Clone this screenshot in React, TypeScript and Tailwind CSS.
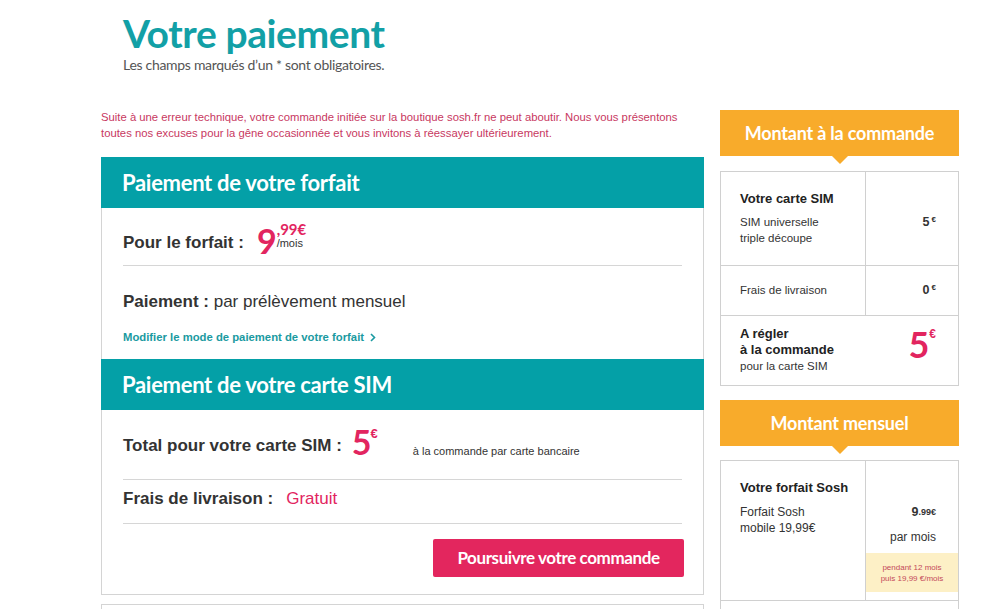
import React from 'react'

const HEAD = { fontFamily: 'Lato, "Open Sans", sans-serif' }

function TealHeader({ title }: { title: string }) {
  return (
    <div className="h-[51px] bg-[#04a0a7] flex items-center pl-[21px]">
      <h2 className="text-white text-[22px] font-bold tracking-[-0.3px]" style={HEAD}>
        {title}
      </h2>
    </div>
  )
}

function OrangeHeader({ title }: { title: string }) {
  return (
    <div className="relative">
      <div className="h-[46px] bg-[#f8ab2b] flex items-center justify-center">
        <h3 className="text-white text-[18px] font-bold tracking-[-0.2px]" style={HEAD}>
          {title}
        </h3>
      </div>
      <div className="absolute left-1/2 -translate-x-1/2 top-[46px] w-0 h-0 border-l-[8px] border-r-[8px] border-t-[8px] border-l-transparent border-r-transparent border-t-[#f8ab2b]" />
    </div>
  )
}

export default function App() {
  return (
    <div className="w-[999px] h-[609px] overflow-hidden bg-white" style={{ fontFamily: '"Liberation Sans", Arial, sans-serif' }}>
      <div className="pl-[123px] pt-[11px]">
        <h1 className="text-[39px] leading-[44px] font-bold text-[#12a0a6] tracking-[-0.4px]" style={HEAD}>
          Votre paiement
        </h1>
        <p className="text-[14px] leading-[16px] text-[#555] tracking-[-0.3px] mt-[2px]" style={HEAD}>
          Les champs marqués d’un * sont obligatoires.
        </p>
      </div>

      <div className="flex gap-[16px] pl-[101px] mt-[37px]">
        {/* left column */}
        <div className="w-[603px] shrink-0 -mt-[1px]">
          <p className="text-[11.3px] leading-[16px] text-[#c8385f] pr-[8px]">
            Suite à une erreur technique, votre commande initiée sur la boutique sosh.fr ne peut aboutir. Nous vous présentons
            toutes nos excuses pour la gêne occasionnée et vous invitons à réessayer ultérieurement.
          </p>

          <div className="mt-[16px]">
            <TealHeader title="Paiement de votre forfait" />
            <div className="border-x border-[#d4d4d4] px-[21px]">
              <div className="h-[58px] flex items-center border-b border-[#d6d6d6] pt-[12px]">
                <span className="text-[17px] font-bold text-[#333]">Pour le forfait :</span>
                <span className="ml-[13px] flex items-start text-[#e2255f] -mt-[4px]">
                  <span className="text-[34px] leading-[30px] font-bold" style={HEAD}>9</span>
                  <span className="flex flex-col ml-[0px] -mt-[4px]">
                    <span className="text-[15px] leading-[15px] font-bold" style={HEAD}>,99€</span>
                    <span className="text-[11px] leading-[12px] text-[#333]">/mois</span>
                  </span>
                </span>
              </div>
              <div className="h-[54px] flex items-end pb-[6px]">
                <span className="text-[17px] text-[#333]">
                  <span className="font-bold">Paiement :</span> par prélèvement mensuel
                </span>
              </div>
              <div className="h-[39px] flex items-start pt-[9px]">
                <span className="text-[11.3px] font-bold text-[#1a9aa1] flex items-center gap-[6px]">
                  Modifier le mode de paiement de votre forfait
                  <svg width="6" height="9" viewBox="0 0 6 9" fill="none">
                    <path d="M1 1l3.5 3.5L1 8" stroke="#1a9aa1" strokeWidth="1.6" />
                  </svg>
                </span>
              </div>
            </div>

            <TealHeader title="Paiement de votre carte SIM" />
            <div className="border-x border-b border-[#d4d4d4] px-[21px] pb-[17px]">
              <div className="h-[70px] flex items-center border-b border-[#d6d6d6] pt-[2px]">
                <span className="text-[17px] font-bold text-[#333]">Total pour votre carte SIM :</span>
                <span className="ml-[10px] flex items-start text-[#e2255f] -mt-[8px]">
                  <span className="text-[34px] leading-[30px] font-bold" style={HEAD}>5</span>
                  <span className="text-[13px] leading-[13px] font-bold -ml-[1px]">€</span>
                </span>
                <span className="ml-[35px] mt-[12px] text-[11px] text-[#333]">à la commande par carte bancaire</span>
              </div>
              <div className="h-[44px] flex items-center border-b border-[#d6d6d6] pb-[6px]">
                <span className="text-[17px] font-bold text-[#333]">Frais de livraison :</span>
                <span className="ml-[13px] text-[17px] text-[#e2255f]">Gratuit</span>
              </div>
              <div className="flex justify-end pt-[15px] -mr-[2px]">
                <button className="w-[251px] h-[38px] rounded-[2px] bg-[#e3265e] text-white text-[17px] font-bold tracking-[-0.4px]" style={HEAD}>
                  Poursuivre votre commande
                </button>
              </div>
            </div>
            <div className="mt-[9px] h-[40px] border border-[#d4d4d4]" />
          </div>
        </div>

        {/* right column */}
        <div className="w-[239px] shrink-0">
          <OrangeHeader title="Montant à la commande" />
          <div className="mt-[15px] border border-[#d0d0d0] text-[#333]">
            <div className="flex h-[94px] border-b border-[#d0d0d0]">
              <div className="w-[145px] border-r border-[#d0d0d0] pl-[19px] pt-[19px]">
                <div className="text-[13px] font-bold leading-[16px] text-[#222]">Votre carte SIM</div>
                <div className="text-[11.5px] leading-[16px] mt-[7px]">SIM universelle<br />triple découpe</div>
              </div>
              <div className="flex-1 flex justify-end pr-[22px] pt-[43px]">
                <span className="text-[12.5px] font-bold leading-[14px]">5<sup className="text-[8px] ml-[2px]">€</sup></span>
              </div>
            </div>
            <div className="flex h-[50px] border-b border-[#d0d0d0]">
              <div className="w-[145px] border-r border-[#d0d0d0] pl-[19px] flex items-center">
                <span className="text-[11.5px]">Frais de livraison</span>
              </div>
              <div className="flex-1 flex justify-end items-center pr-[22px]">
                <span className="text-[12.5px] font-bold">0<sup className="text-[8px] ml-[2px]">€</sup></span>
              </div>
            </div>
            <div className="flex h-[69px] pl-[19px] pr-[22px] pt-[10px]">
              <div className="flex-1">
                <div className="text-[13px] font-bold leading-[16px] text-[#222]">A régler<br />à la commande</div>
                <div className="text-[11.5px] leading-[15px] mt-[1px]">pour la carte SIM</div>
              </div>
              <div className="flex items-start text-[#e2255f] pt-[2px]">
                <span className="text-[36px] leading-[32px] font-bold" style={HEAD}>5</span>
                <span className="text-[12px] leading-[12px] font-bold">€</span>
              </div>
            </div>
          </div>

          <div className="mt-[14px]">
            <OrangeHeader title="Montant mensuel" />
          </div>
          <div className="mt-[14px] border border-[#d0d0d0] text-[#333]">
            <div className="flex h-[140px] border-b border-[#d0d0d0]">
              <div className="w-[145px] border-r border-[#d0d0d0] pl-[19px] pt-[19px]">
                <div className="text-[13px] font-bold leading-[16px] text-[#222]">Votre forfait Sosh</div>
                <div className="text-[12px] leading-[16px] mt-[8px]">Forfait Sosh<br />mobile 19,99€</div>
              </div>
              <div className="flex-1 flex flex-col">
                <div className="flex justify-end pr-[22px] pt-[44px]">
                  <span className="text-[12.5px] font-bold leading-[14px]">9<span className="text-[9px] align-top">.99€</span></span>
                </div>
                <div className="text-right pr-[22px] text-[12px] mt-[9px]">par mois</div>
                <div className="mt-[7px] h-[39px] bg-[#fdf0c6] flex flex-col items-center justify-center text-[8px] leading-[11px] text-[#c44a5a]">
                  <span>pendant 12 mois</span>
                  <span>puis 19,99 €/mois</span>
                </div>
              </div>
            </div>
            <div className="h-[20px]" />
          </div>
        </div>
      </div>
    </div>
  )
}
